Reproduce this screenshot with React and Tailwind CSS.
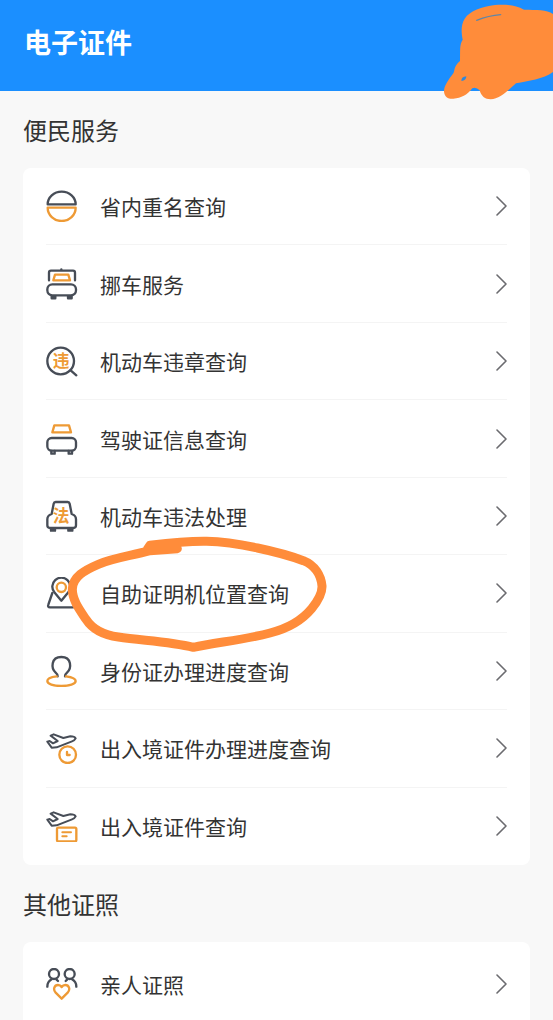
import React from "react";

const DARK = "#474d57";
const ORANGE = "#ee9a35";

const Icon = ({ children }) => (
  <svg
    className="h-8 w-8 shrink-0"
    viewBox="0 0 96 96"
    fill="none"
    stroke={DARK}
    strokeWidth="7"
    strokeLinecap="round"
    strokeLinejoin="round"
    aria-hidden="true"
  >
    {children}
  </svg>
);

const Glyph = ({ children }) => (
  <text
    x="45"
    y="67"
    textAnchor="middle"
    fontSize="50"
    fontWeight="700"
    fill={ORANGE}
    stroke="none"
  >
    {children}
  </text>
);

const Plane = () => (
  <path
    strokeWidth="6"
    d="M4 29L11 27L21 34L35 27L14 11L23 7L52 18L73 13Q86 13 89 19Q86 25 78 28L32 46L17 47Z"
  />
);

const SameNameIcon = () => (
  <Icon>
    <path d="M5 43A42 38 0 0 1 89 43Z" />
    <path stroke={ORANGE} d="M5 53H89A42 40 0 0 1 5 53Z" />
  </Icon>
);

const MoveCarIcon = () => (
  <Icon>
    <path d="M9 37V14Q9 8 15 8H81Q87 8 87 14V37M46 4V8" />
    <path stroke={ORANGE} d="M27 20H67L72 37H22Z" />
    <rect x="4" y="49" width="86" height="33" rx="15" />
    <path fill={DARK} d="M17 85H28V91H17ZM66 85H77V91H66Z" />
  </Icon>
);

const ViolationQueryIcon = () => (
  <Icon>
    <circle cx="44" cy="48" r="40" />
    <path d="M74 76L91 91" />
    <Glyph>违</Glyph>
  </Icon>
);

const LicenseIcon = () => (
  <Icon>
    <path stroke={ORANGE} d="M25 7H69L75 28H19Z" />
    <rect x="4" y="45" width="86" height="38" rx="13" />
    <path d="M16 84V92H26V84M68 84V92H78V84" />
  </Icon>
);

const ViolationHandleIcon = () => (
  <Icon>
    <path d="M29 6H65Q70 6 71 11L77 42Q90 46 90 58V76Q90 84 82 84H12Q4 84 4 76V58Q4 46 17 42L23 11Q24 6 29 6Z" />
    <path fill={DARK} d="M15 86H27V92H15ZM67 86H79V92H67Z" />
    <Glyph>法</Glyph>
  </Icon>
);

const LocationIcon = () => (
  <Icon>
    <path d="M46 71L25 46A27 27 0 1 1 67 46Z" />
    <circle cx="46" cy="31" r="14" stroke={ORANGE} />
    <path d="M19 48L7 83Q4 91 12 91H80Q88 91 85 83L73 48" />
  </Icon>
);

const PersonIcon = () => (
  <Icon>
    <path d="M35 64Q35 58 29 53C15 41 14 6 46 6S77 41 63 53Q57 58 57 64" />
    <path
      stroke={ORANGE}
      d="M32 64C16 66 4 71 4 78C4 87 22 93 46 93S89 87 89 78C89 71 76 66 60 64"
    />
  </Icon>
);

const ExitProgressIcon = () => (
  <Icon>
    <Plane />
    <circle cx="65" cy="68" r="25" stroke={ORANGE} />
    <path stroke={ORANGE} d="M63 60V69H71" />
  </Icon>
);

const ExitQueryIcon = () => (
  <Icon>
    <Plane />
    <rect x="33" y="53" width="58" height="41" rx="4" stroke={ORANGE} />
    <path stroke={ORANGE} strokeWidth="6" d="M49 67H75M49 79H62" />
  </Icon>
);

const FamilyIcon = () => (
  <Icon>
    <circle cx="24" cy="18" r="15" />
    <circle cx="71" cy="18" r="15" />
    <path d="M4 56Q4 41 17 34M91 56Q91 41 78 34M31 34L36 39M64 34L59 39" />
    <path
      stroke={ORANGE}
      d="M47 92L29 74C20 64 25 51 36 51Q43 51 47 57Q51 51 58 51C69 51 74 64 65 74Z"
    />
  </Icon>
);

const services = [
  { title: "省内重名查询", icon: SameNameIcon },
  { title: "挪车服务", icon: MoveCarIcon },
  { title: "机动车违章查询", icon: ViolationQueryIcon },
  { title: "驾驶证信息查询", icon: LicenseIcon },
  { title: "机动车违法处理", icon: ViolationHandleIcon },
  { title: "自助证明机位置查询", icon: LocationIcon, marked: true },
  { title: "身份证办理进度查询", icon: PersonIcon },
  { title: "出入境证件办理进度查询", icon: ExitProgressIcon },
  { title: "出入境证件查询", icon: ExitQueryIcon },
];

const others = [{ title: "亲人证照", icon: FamilyIcon }];

// hand-drawn loop around a row
const MarkerLoop = () => (
  <svg
    className="pointer-events-none absolute -left-1.5 top-1/2 z-10 h-[130px] w-[300px] -translate-y-1/2"
    viewBox="0 0 900 390"
    fill="none"
    stroke="#ff8c3a"
    strokeWidth="27"
    strokeLinecap="round"
    strokeLinejoin="round"
    aria-hidden="true"
  >
    <path d="M412 62L330 68C270 84 220 90 175 109C135 126 97 147 97 184C97 217 120 247 138 274C158 305 195 322 235 327C310 338 390 340 460 358C530 343 610 336 690 315C750 300 790 272 815 242C835 217 847 197 846 174C843 142 825 112 790 98C720 72 590 42 500 40C440 39 380 46 330 52L322 64L410 58" />
  </svg>
);

// scribble over the corner of the header
const MarkerScribble = () => (
  <svg
    className="pointer-events-none absolute right-0 top-0 h-[100px] w-[153px]"
    viewBox="0 0 459 300"
    aria-hidden="true"
  >
    <path
      fill="#ff8c3a"
      d="M459 42C440 28 410 30 372 29C345 14 315 13 285 15C245 20 210 32 194 56C182 75 184 100 188 119C178 135 181 150 180 183C160 200 165 212 160 220C145 240 132 257 132 275C134 292 145 297 160 296C185 294 200 286 217 265Q228 260 239 271C243 288 255 298 272 298C300 296 320 275 348 250C385 242 430 238 459 216Z"
    />
    <path
      fill="none"
      stroke="#5f86a8"
      strokeWidth="4"
      strokeLinecap="round"
      d="M230 61C250 53 275 46 302 44"
    />
    <path fill="#2f89dd" d="M184 243Q184 230 199 229Q199 241 184 243Z" />
  </svg>
);

const Row = ({ title, icon: RowIcon, marked }) => (
  <li className="relative border-b border-[#f4f4f4] last:border-b-0">
    <a href="#" className="flex h-full items-center">
      <RowIcon />
      <span className="ml-[22px] flex-1 text-[21px] leading-8 text-[#333333]">
        {title}
      </span>
      <svg
        className="h-5 w-3 shrink-0"
        viewBox="0 0 12 20"
        fill="none"
        stroke="#6b6b6f"
        strokeWidth="1.6"
        strokeLinecap="round"
        strokeLinejoin="round"
        aria-hidden="true"
      >
        <path d="M2 1L11 10L2 19" />
      </svg>
    </a>
    {marked && <MarkerLoop />}
  </li>
);

const App = () => {
  return (
    <div className="h-screen overflow-hidden bg-[#f8f8f8] font-['Noto_Sans_CJK_SC',sans-serif]">
      <header className="relative bg-[#1b8fff] px-6 pb-[29px] pt-[22px]">
        <h1 className="text-[27px] font-bold leading-10 text-white">
          电子证件
        </h1>
        <MarkerScribble />
      </header>
      <main className="px-[23px]">
        <section>
          <h2 className="pb-[18px] pt-[19px] text-2xl leading-10 text-[#333333]">
            便民服务
          </h2>
          <ul className="grid min-h-[697px] auto-rows-fr rounded-lg bg-white px-[23px]">
            {services.map((item) => (
              <Row key={item.title} {...item} />
            ))}
          </ul>
        </section>
        <section>
          <h2 className="pb-[18px] pt-[19px] text-2xl leading-10 text-[#333333]">
            其他证照
          </h2>
          <ul className="grid min-h-[84px] auto-rows-fr rounded-t-lg bg-white px-[23px]">
            {others.map((item) => (
              <Row key={item.title} {...item} />
            ))}
          </ul>
        </section>
      </main>
    </div>
  );
};

export default App;
